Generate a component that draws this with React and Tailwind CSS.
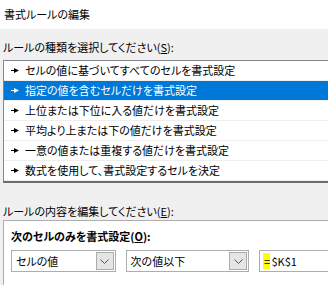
import React from "react";

const rows = [
  "セルの値に基づいてすべてのセルを書式設定",
  "指定の値を含むセルだけを書式設定",
  "上位または下位に入る値だけを書式設定",
  "平均より上または下の値だけを書式設定",
  "一意の値または重複する値だけを書式設定",
  "数式を使用して、書式設定するセルを決定",
];

function Bullet({ color }) {
  return (
    <svg width="8" height="5" viewBox="0 0 8 5" className="shrink-0">
      <rect x="0" y="2" width="4" height="1" fill={color} />
      <polygon points="3,0 8,2.5 3,5" fill={color} />
    </svg>
  );
}

function Chevron() {
  return (
    <svg width="9" height="5" viewBox="0 0 9 5">
      <polyline points="0.5,0.5 4.5,4.5 8.5,0.5" fill="none" stroke="#555" strokeWidth="1" />
    </svg>
  );
}

function Combo({ text, width }) {
  return (
    <div className={`h-[22px] border border-[#adadad] bg-white flex items-center ${width}`}>
      <span className="flex-1 pl-[4px] text-[11px] text-black leading-none">{text}</span>
      <div className="w-[18px] h-[18px] mr-[1px] bg-[#e5e5e5] border border-[#acacac] flex items-center justify-center">
        <Chevron />
      </div>
    </div>
  );
}

export default function App() {
  return (
    <div
      className="w-[328px] h-[285px] overflow-hidden bg-[#f0f0f0] text-black [font-feature-settings:'palt']"
      style={{ fontFamily: '"Noto Sans CJK JP", "Noto Sans", sans-serif' }}
    >
      <div className="h-[29px] bg-white flex items-center pl-[4px] text-[11px]">書式ルールの編集</div>
      <div className="pl-[3px] pt-[10px] h-[31px] text-[11px] leading-[16px]">
        ルールの種類を選択してください(<span className="underline">S</span>):
      </div>
      <div className="ml-[3px] mr-[-10px] border border-[#828790] border-b-[2px] border-b-[#6d6d6d] bg-white">
        {rows.map((r, i) => (
          <div
            key={i}
            className={`h-[20px] flex items-center gap-[6px] pl-[7px] text-[11px] border-b border-[#eeeeee] ${
              i === 1 ? "bg-[#0078d7] text-white" : "text-black"
            }`}
          >
            <Bullet color={i === 1 ? "#ffffff" : "#000000"} />
            <span className="leading-none">{r}</span>
          </div>
        ))}
      </div>
      <div className="pl-[3px] pt-[20px] h-[37px] text-[11px] leading-[16px]">
        ルールの内容を編集してください(<span className="underline">E</span>):
      </div>
      <div className="ml-[3px] mr-[-10px] h-[80px] border border-[#adadad] bg-white pl-[7px] pt-[7px]">
        <div className="text-[11px] font-bold leading-[16px]">
          次のセルのみを書式設定(<span className="underline">O</span>):
        </div>
        <div className="flex gap-[10px] mt-[6px]">
          <Combo text="セルの値" width="w-[108px]" />
          <Combo text="次の値以下" width="w-[128px]" />
          <div className="h-[22px] w-[80px] border border-[#adadad] bg-white flex items-center pl-[3px] text-[11px]">
            <span className="w-[7px] h-[16px] bg-[#ffff00] flex items-center justify-center leading-none">=</span>
            <span className="leading-none ml-[1px]">$K$1</span>
          </div>
        </div>
      </div>
    </div>
  );
}
